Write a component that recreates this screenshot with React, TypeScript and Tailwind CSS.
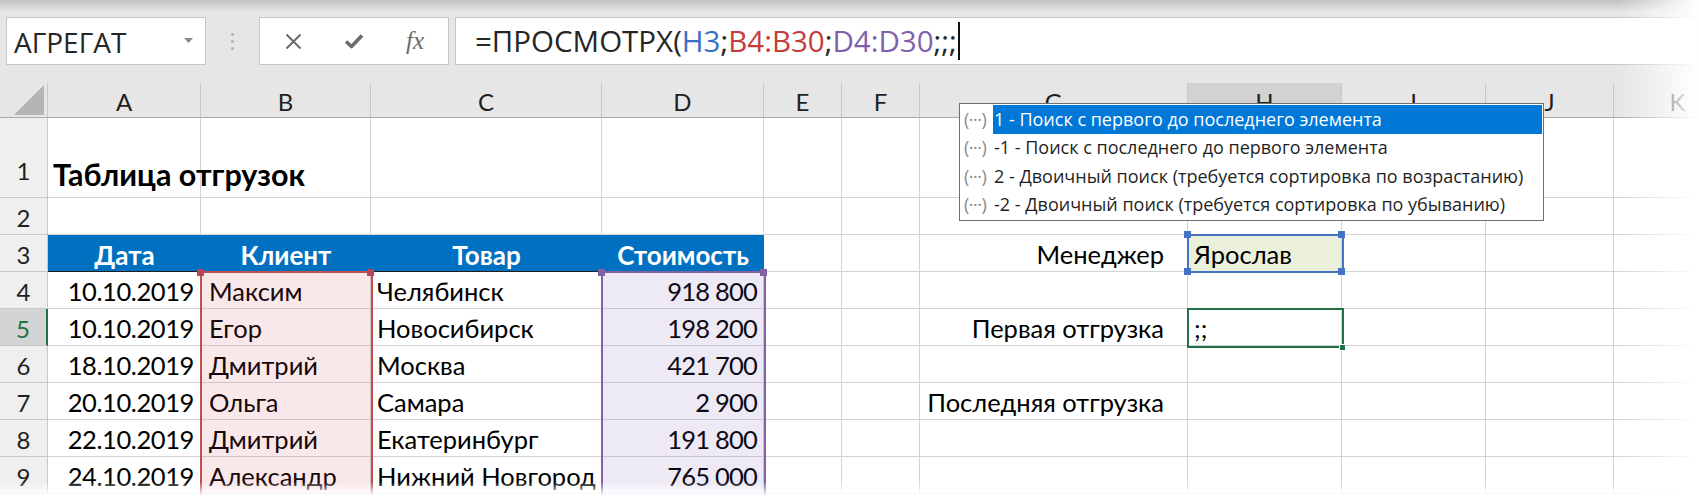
import React from 'react';

const letters = ['A', 'B', 'C', 'D', 'E', 'F', 'G', 'H', 'I', 'J', 'K'];

const dates = ['10.10.2019', '10.10.2019', '18.10.2019', '20.10.2019', '22.10.2019', '24.10.2019'];
const clients = ['Максим', 'Егор', 'Дмитрий', 'Ольга', 'Дмитрий', 'Александр'];
const goods = ['Челябинск', 'Новосибирск', 'Москва', 'Самара', 'Екатеринбург', 'Нижний Новгород'];
const prices = ['918 800', '198 200', '421 700', '2 900', '191 800', '765 000'];

const options = [
  '1 - Поиск с первого до последнего элемента',
  '-1 - Поиск с последнего до первого элемента',
  '2 - Двоичный поиск (требуется сортировка по возрастанию)',
  '-2 - Двоичный поиск (требуется сортировка по убыванию)',
];

const cellBase =
  'flex items-center whitespace-nowrap border-r border-b border-[#d4d4d4] text-[25.5px] leading-none text-black pt-[3px]';

function Cell({ row, col }: { row: number; col: number }) {
  // шапка таблицы
  if (row === 3 && col < 4) {
    const titles = ['Дата', 'Клиент', 'Товар', 'Стоимость'];
    return (
      <div className="flex items-center justify-center whitespace-nowrap bg-[#0070c0] border-b border-b-[#1f1f1f] text-[26px] leading-none font-bold text-white pt-[3px]">
        {titles[col]}
      </div>
    );
  }
  if (row === 1 && col === 0) {
    return (
      <div className="relative flex items-end whitespace-nowrap border-r border-b border-[#d4d4d4] pb-[8px] pl-[5px] text-[30.5px] leading-none font-bold text-black">
        {'Таблица отгрузок'}
      </div>
    );
  }
  if (row >= 4) {
    const i = row - 4;
    if (col === 0) return <div className={`${cellBase} justify-end pr-[6px] tracking-[-0.4px]`}>{dates[i]}</div>;
    if (col === 1) return <div className={`${cellBase} pl-[8px]`}>{clients[i]}</div>;
    if (col === 2) return <div className={`${cellBase} pl-[6px]`}>{goods[i]}</div>;
    if (col === 3) return <div className={`${cellBase} justify-end pr-[6px] tracking-[-0.8px]`}>{prices[i]}</div>;
  }
  if (col === 6) {
    const labels: Record<number, string> = { 3: 'Менеджер', 5: 'Первая отгрузка', 7: 'Последняя отгрузка' };
    if (labels[row]) return <div className={`${cellBase} justify-end pr-[23px]`}>{labels[row]}</div>;
  }
  if (col === 7 && row === 3) {
    return <div className={`${cellBase} bg-[#eaf0da] pl-[6px]`}>Ярослав</div>;
  }
  if (col === 7 && row === 5) {
    return <div className={`${cellBase} pl-[6px]`}>;;</div>;
  }
  return <div className={cellBase} />;
}

function Handle({ className }: { className: string }) {
  return <div className={`absolute h-[7px] w-[7px] ${className}`} />;
}

export default function App() {
  const rows = [1, 2, 3, 4, 5, 6, 7, 8, 9];

  return (
    <div className="relative h-[496px] w-[1699px] overflow-hidden bg-white font-['Lato',sans-serif]">
      {/* Панель формул */}
      <div className="relative flex h-[83px] items-start bg-[#e6e6e6] pt-[17px] pl-[6px]">
        <div className="flex h-[48px] w-[200px] items-center justify-between border border-[#c6c6c6] bg-white pl-[7px] pr-[12px] font-['Open_Sans',sans-serif] text-[28px] text-[#262626]">
          <span className="pt-[2px]">АГРЕГАТ</span>
          <svg width="9" height="6" viewBox="0 0 9 6">
            <path d="M0 0 L9 0 L4.5 5 Z" fill="#8a8a8a" />
          </svg>
        </div>
        <div className="flex h-[48px] w-[53px] flex-col items-center justify-center gap-[4px]">
          <div className="h-[3px] w-[3px] rounded-full bg-[#b0b0b0]" />
          <div className="h-[3px] w-[3px] rounded-full bg-[#b0b0b0]" />
          <div className="h-[3px] w-[3px] rounded-full bg-[#b0b0b0]" />
        </div>
        <div className="flex h-[48px] w-[190px] items-center border border-[#c6c6c6] bg-white text-[#6b6b6b]">
          <div className="flex w-[64px] justify-center pl-[2px]">
            <svg width="17" height="17" viewBox="0 0 17 17">
              <path d="M1.5 1.5 L15.5 15.5 M15.5 1.5 L1.5 15.5" stroke="#6b6b6b" strokeWidth="2" />
            </svg>
          </div>
          <div className="flex w-[60px] justify-center">
            <svg width="20" height="16" viewBox="0 0 20 16">
              <path d="M2 8.5 L7.5 13.5 L18 2.5" stroke="#6b6b6b" strokeWidth="3.6" fill="none" strokeLinejoin="round" />
            </svg>
          </div>
          <div className="flex w-[62px] justify-center font-['Liberation_Serif',serif] text-[25px] italic text-[#6b6b6b]">
            fx
          </div>
        </div>
        <div className="ml-[6px] flex h-[48px] flex-1 items-center border border-[#c6c6c6] bg-white pl-[19px] font-['Open_Sans',sans-serif] text-[29.5px] text-[#262626]">
          <span>=ПРОСМОТРХ(</span>
          <span className="text-[#3a6fc4]">H3</span>
          <span>;</span>
          <span className="text-[#c43c3c]">B4:B30</span>
          <span>;</span>
          <span className="text-[#7f5fb0]">D4:D30</span>
          <span>;;;</span>
          <span className="ml-[1px] h-[38px] w-[2px] bg-[#111]" />
        </div>
        <div className="pointer-events-none absolute inset-x-0 top-0 h-[12px] bg-linear-to-b from-[#c2c2c2] to-transparent" />
      </div>

      {/* Лист */}
      <div className="relative grid grid-cols-[48px_153px_170px_231px_162px_78px_78px_268px_154px_144px_128px_128px] grid-rows-[35px_80px_repeat(8,37px)]">
        <div className="relative border-r border-b border-r-[#c8c8c8] border-b-[#ababab] bg-[#e6e6e6]">
          <svg className="absolute right-[3px] bottom-[2px]" width="30" height="30" viewBox="0 0 30 30">
            <path d="M30 0 L30 30 L0 30 Z" fill="#b4b4b4" />
          </svg>
        </div>
        {letters.map((l) => (
          <div
            key={l}
            className={
              l === 'H'
                ? 'flex items-center justify-center border-r border-b border-r-[#c8c8c8] border-b-[#217346] bg-[#d2d2d2] pt-[4px] text-[24px] text-[#1f1f1f]'
                : 'flex items-center justify-center border-r border-b border-r-[#c8c8c8] border-b-[#ababab] bg-[#e6e6e6] pt-[4px] text-[24px] text-[#1f1f1f]'
            }
          >
            {l}
          </div>
        ))}
        {rows.map((r) => (
          <React.Fragment key={r}>
            <div
              className={
                r === 5
                  ? 'flex items-center justify-center border-r-2 border-b border-r-[#217346] border-b-[#c8c8c8] bg-[#d4d4d4] pt-[3px] text-[24px] text-[#217346]'
                  : r === 1
                    ? 'flex items-end justify-center border-r border-b border-r-[#c8c8c8] border-b-[#c8c8c8] bg-[#efefef] pb-[8px] text-[24px] text-[#1f1f1f]'
                    : 'flex items-center justify-center border-r border-b border-r-[#c8c8c8] border-b-[#c8c8c8] bg-[#efefef] pt-[3px] text-[24px] text-[#1f1f1f]'
              }
            >
              {r}
            </div>
            {letters.map((_, c) => (
              <Cell key={c} row={r} col={c} />
            ))}
          </React.Fragment>
        ))}

        {/* Подсветка диапазонов из формулы */}
        <div className="pointer-events-none absolute top-[188px] left-[200px] h-[320px] w-[173px] border-2 border-[#c0504d] bg-[#d04050]/12" />
        <Handle className="top-[186px] left-[197px] bg-[#b8465a]" />
        <Handle className="top-[186px] left-[367px] bg-[#b8465a]" />
        <div className="pointer-events-none absolute top-[188px] left-[601px] h-[320px] w-[165px] border-2 border-[#8064a2] bg-[#7050b0]/12" />
        <Handle className="top-[186px] left-[598px] bg-[#8064a2]" />
        <Handle className="top-[186px] left-[760px] bg-[#8064a2]" />
        <div className="pointer-events-none absolute top-[151px] left-[1187px] h-[39px] w-[157px] border-2 border-[#4472c4]" />
        <Handle className="top-[148px] left-[1184px] bg-[#4472c4]" />
        <Handle className="top-[148px] left-[1338px] bg-[#4472c4]" />
        <Handle className="top-[185px] left-[1184px] bg-[#4472c4]" />
        <Handle className="top-[185px] left-[1338px] bg-[#4472c4]" />
        {/* Активная ячейка H5 */}
        <div className="pointer-events-none absolute top-[225px] left-[1187px] h-[40px] w-[157px] border-2 border-[#217346]" />
        <Handle className="top-[261px] left-[1339px] border border-white bg-[#217346]" />
      </div>

      {/* Подсказка аргументов */}
      <div className="absolute top-[103px] left-[959px] w-[585px] border border-[#6f6f6f] bg-white py-[1px] pr-[1px] font-['Open_Sans',sans-serif] text-[18px] text-[#1f1f1f]">
        {options.map((o, i) => (
          <div key={o} className="flex h-[28.5px] items-center whitespace-nowrap">
            <span className="w-[33px] pl-[4px] text-[18px] tracking-[-0.5px] text-[#8a8a8a]">(···)</span>
            <span
              className={
                i === 0
                  ? 'flex h-full flex-1 items-center bg-[#0078d7] pl-[1px] text-white'
                  : 'flex h-full flex-1 items-center pl-[1px]'
              }
            >
              {o}
            </span>
          </div>
        ))}
      </div>

      {/* Затухание по краям */}
      <div className="pointer-events-none absolute inset-y-0 right-0 w-[80px] bg-linear-to-r from-transparent to-white" />
      <div className="pointer-events-none absolute inset-x-0 bottom-0 h-[14px] bg-linear-to-b from-transparent to-white" />
    </div>
  );
}
